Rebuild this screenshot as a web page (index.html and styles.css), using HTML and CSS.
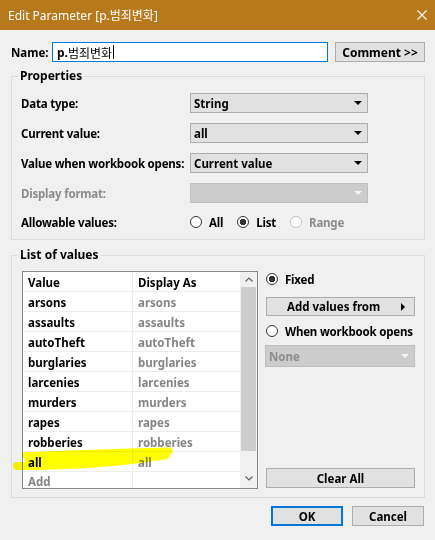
FILE: index.html
```html
<!DOCTYPE html>
<html>
<head>
<meta charset="utf-8">
<link rel="stylesheet" href="styles.css">
</head>
<body>
<div class="dialog">
  <div class="titlebar">
    <span class="title">Edit Parameter [p.범죄변화]</span>
    <svg class="close" width="10" height="10" viewBox="0 0 10 10"><path d="M0.5 0.5 L9.5 9.5 M9.5 0.5 L0.5 9.5" stroke="#fff" stroke-width="1.1" fill="none"/></svg>
  </div>

  <div class="name-row">
    <span class="lbl">Name:</span>
    <div class="input"><b>p.</b><span class="ko">범죄변화</span><span class="caret"></span></div>
    <button class="btn comment">Comment &gt;&gt;</button>
  </div>

  <fieldset class="group props">
    <legend>Properties</legend>
    <div class="prow first">
      <span class="plabel">Data type:</span>
      <div class="select"><span>String</span><i class="arrow"></i></div>
    </div>
    <div class="prow">
      <span class="plabel">Current value:</span>
      <div class="select"><span>all</span><i class="arrow"></i></div>
    </div>
    <div class="prow">
      <span class="plabel">Value when workbook opens:</span>
      <div class="select"><span>Current value</span><i class="arrow"></i></div>
    </div>
    <div class="prow">
      <span class="plabel dim">Display format:</span>
      <div class="select disabled"><span></span><i class="arrow"></i></div>
    </div>
    <div class="prow radios-row">
      <span class="plabel">Allowable values:</span>
      <div class="radios">
        <span class="radio"><i class="dot"></i>All</span>
        <span class="radio"><i class="dot on"></i>List</span>
        <span class="radio off"><i class="dot"></i>Range</span>
      </div>
    </div>
  </fieldset>

  <fieldset class="group values">
    <legend>List of values</legend>
    <div class="values-body">
      <div class="table">
        <div class="grid">
          <div class="row head"><span class="cell">Value</span><span class="cell">Display As</span></div>
          <div class="row"><span class="cell">arsons</span><span class="cell gray">arsons</span></div>
          <div class="row"><span class="cell">assaults</span><span class="cell gray">assaults</span></div>
          <div class="row"><span class="cell">autoTheft</span><span class="cell gray">autoTheft</span></div>
          <div class="row"><span class="cell">burglaries</span><span class="cell gray">burglaries</span></div>
          <div class="row"><span class="cell">larcenies</span><span class="cell gray">larcenies</span></div>
          <div class="row"><span class="cell">murders</span><span class="cell gray">murders</span></div>
          <div class="row"><span class="cell">rapes</span><span class="cell gray">rapes</span></div>
          <div class="row"><span class="cell">robberies</span><span class="cell gray">robberies</span></div>
          <div class="row"><span class="cell">all</span><span class="cell gray">all</span></div>
          <div class="row last"><span class="cell gray">Add</span><span class="cell"></span></div>
        </div>
        <div class="scrollbar">
          <div class="sb-btn"><svg width="8" height="5" viewBox="0 0 8 5"><path d="M0.5 4.5 L4 1 L7.5 4.5" stroke="#606060" stroke-width="1.2" fill="none"/></svg></div>
          <div class="thumb"></div>
          <div class="sb-btn down"><svg width="8" height="5" viewBox="0 0 8 5"><path d="M0.5 0.5 L4 4 L7.5 0.5" stroke="#606060" stroke-width="1.2" fill="none"/></svg></div>
        </div>
      </div>
      <div class="side">
        <span class="radio side-radio"><i class="dot on"></i>Fixed</span>
        <button class="btn addvals"><span>Add values from</span><i class="rtri"></i></button>
        <span class="radio side-radio when"><i class="dot"></i>When workbook opens</span>
        <div class="select disabled none"><span>None</span><i class="arrow"></i></div>
        <button class="btn clear">Clear All</button>
      </div>
    </div>
  </fieldset>

  <div class="footer">
    <button class="btn ok">OK</button>
    <button class="btn">Cancel</button>
  </div>

  <svg class="marker" width="435" height="540" viewBox="0 0 435 540">
    <path d="M26 455.5 C70 454 120 452 169 451" stroke="#ffff00" stroke-width="7" fill="none" stroke-linecap="round"/>
    <path d="M17 466 C60 466 120 463 166 455" stroke="#ffff00" stroke-width="8" fill="none" stroke-linecap="round"/>
    <path d="M28 460 L150 456" stroke="#ffff00" stroke-width="7" fill="none" stroke-linecap="round"/>
  </svg>
</div>
</body>
</html>
```

FILE: styles.css
```css
body {
  margin: 0;
  background: #f0f0f0;
  font-family: "Noto Sans", "Noto Sans CJK KR", sans-serif;
  font-size: 11.5px;
  color: #000;
}

.dialog {
  width: 435px;
  height: 540px;
  position: relative;
  overflow: hidden;
  white-space: nowrap;
}

.titlebar {
  height: 30px;
  background: #b8781c;
  display: flex;
  align-items: center;
  justify-content: space-between;
  padding: 0 8px 0 8px;
  box-sizing: border-box;
  color: #fff;
}

.title {
  font-size: 12px;
}

.name-row {
  display: flex;
  align-items: center;
  padding: 12px 0 0 11px;
  height: 20px;
}

.lbl {
  width: 41px;
  font-weight: bold;
}

.input {
  width: 276px;
  height: 20px;
  box-sizing: border-box;
  border: 1px solid #0078d7;
  background: #fff;
  display: flex;
  align-items: center;
  padding-left: 4px;
  font-size: 12px;
}

.ko {
  font-family: "Noto Sans CJK KR", sans-serif;
}

.caret {
  width: 1px;
  height: 14px;
  background: #000;
  margin-left: 1px;
}

.btn {
  background: #e1e1e1;
  border: 1px solid #adadad;
  font-family: "Noto Sans", sans-serif;
  font-weight: bold;
  font-size: 11.5px;
  color: #000;
  padding: 0;
  margin: 0;
  box-sizing: border-box;
  height: 20px;
  white-space: nowrap;
}

.comment {
  margin-left: 7px;
  width: 90px;
  font-size: 12px;
}

.group {
  margin: 0 0 0 11px;
  width: 414px;
  box-sizing: border-box;
  border: 1px solid #dcdcdc;
  padding: 0 9px 0 9px;
  min-width: 0;
}

legend {
  font-weight: bold;
  padding: 0 2px;
  margin-left: -3px;
  line-height: 16px;
  font-size: 12px;
}

.props {
  margin-top: 6px;
  padding-bottom: 7px;
}

.prow {
  display: flex;
  align-items: center;
  height: 20px;
  margin-top: 10px;
}

.prow.first {
  margin-top: 9px;
}

.radios-row {
  margin-top: 9px;
}

.plabel {
  width: 169px;
  flex: none;
  font-weight: bold;
  letter-spacing: -0.2px;
  padding-top: 1px;
}

.dim {
  color: #8c8c8c;
}

.select {
  width: 178px;
  height: 20px;
  box-sizing: border-box;
  border: 1px solid #adadad;
  background: #e1e1e1;
  display: flex;
  align-items: center;
  justify-content: space-between;
  padding: 0 5px 0 3px;
  font-weight: bold;
}

.arrow {
  width: 0;
  height: 0;
  border-left: 4px solid transparent;
  border-right: 4px solid transparent;
  border-top: 4px solid #000;
}

.select.disabled {
  background: #cccccc;
  border-color: #bfbfbf;
}

.select.disabled .arrow {
  border-top-color: #f4f4f4;
}

.radios {
  display: flex;
  align-items: center;
  gap: 14px;
}

.radio {
  display: flex;
  align-items: center;
  gap: 7px;
  font-weight: bold;
  letter-spacing: -0.2px;
}

.radio.off {
  color: #8c8c8c;
}

.dot {
  width: 12px;
  height: 12px;
  flex: none;
  box-sizing: border-box;
  border: 1px solid #333;
  border-radius: 50%;
  background: #fff;
}

.dot.on {
  background: radial-gradient(circle, #333 0 3px, #fff 3.5px);
}

.radio.off .dot {
  border-color: #c4c4c4;
}

.values {
  margin-top: 7px;
  padding-bottom: 8px;
  padding-right: 9px;
}

.values-body {
  display: flex;
  padding-top: 8px;
}

.table {
  margin-left: 1px;
  width: 236px;
  height: 218px;
  box-sizing: border-box;
  border: 1px solid #828790;
  background: #fff;
  display: flex;
}

.grid {
  width: 217px;
  overflow: hidden;
}

.row {
  display: grid;
  grid-template-columns: 109px 1fr;
  height: 20px;
  box-sizing: border-box;
  border-bottom: 1px solid #ededed;
}

.row.last {
  height: 16px;
  border-bottom: 0;
}

.cell {
  padding-left: 5px;
  padding-top: 1px;
  line-height: 19px;
  font-weight: bold;
  white-space: nowrap;
}

.row.last .cell {
  line-height: 17px;
}

.cell + .cell {
  border-left: 1px solid #ededed;
}

.gray {
  color: #858585;
}

.scrollbar {
  width: 17px;
  background: #f0f0f0;
  display: flex;
  flex-direction: column;
  align-items: center;
}

.sb-btn {
  height: 15px;
  width: 17px;
  display: flex;
  align-items: center;
  justify-content: center;
}

.sb-btn.down {
  margin-top: auto;
  height: 18px;
  padding-bottom: 1px;
}

.thumb {
  width: 15px;
  height: 164px;
  background: #cdcdcd;
}

.side {
  margin-left: 7px;
  width: 150px;
  display: flex;
  flex-direction: column;
}

.side-radio {
  height: 16px;
  margin-left: 1px;
}

.addvals {
  margin-top: 10px;
  margin-left: 1px;
  width: 149px;
  height: 19px;
  display: flex;
  align-items: center;
  justify-content: space-between;
  padding: 0 9px 0 20px;
}

.rtri {
  width: 0;
  height: 0;
  border-top: 4px solid transparent;
  border-bottom: 4px solid transparent;
  border-left: 4px solid #000;
}

.when {
  margin-top: 7px;
}

.none {
  margin-top: 6px;
  width: 150px;
  height: 22px;
  color: #8c8c8c;
}

.clear {
  margin-top: auto;
  margin-left: 1px;
  margin-bottom: 1px;
  width: 149px;
  height: 20px;
}

.footer {
  display: flex;
  justify-content: flex-end;
  gap: 9px;
  padding-right: 11px;
  margin-top: 8px;
}

.footer .btn {
  width: 72px;
  height: 20px;
}

.footer .ok {
  border: 2px solid #0078d7;
}

.marker {
  position: absolute;
  left: 0;
  top: 0;
  pointer-events: none;
  mix-blend-mode: multiply;
}
```
